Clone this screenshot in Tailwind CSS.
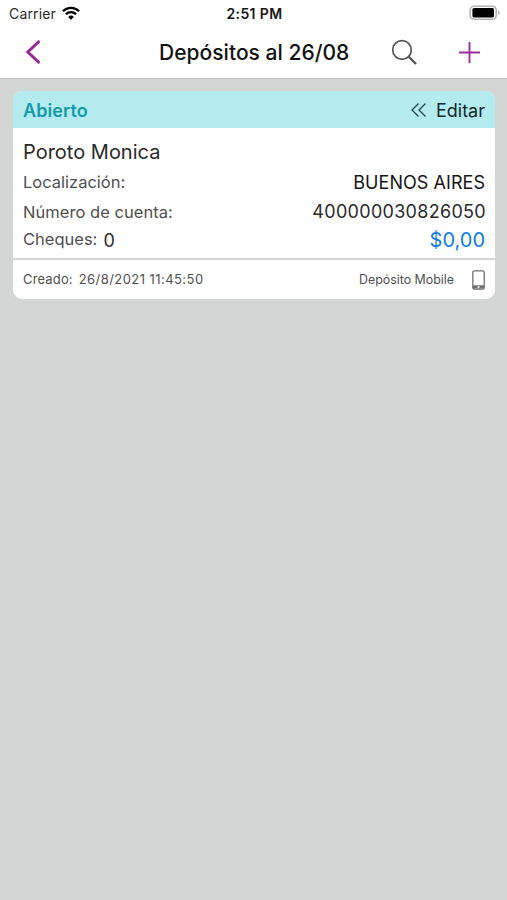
<!DOCTYPE html>
<html lang="es">
<head>
  <meta charset="UTF-8">
  <title>Depósitos</title>
  <script src="https://cdn.jsdelivr.net/npm/@tailwindcss/browser@4"></script>
</head>
<body class="bg-[#d4d6d5] h-[900px] overflow-hidden font-['Inter','Liberation_Sans',sans-serif] text-[#2a2a2a]">
  <header class="bg-white h-[79px] border-b border-[#c4c6c5]">
    <!-- Status bar -->
    <div class="grid grid-cols-3 items-center h-7 pl-[9px] pr-[7px]">
      <div class="flex items-center gap-1.5">
        <span class="text-[14px] leading-7 tracking-[0.15px]">Carrier</span>
        <svg class="w-[18px] h-[14px] mb-0.5" viewBox="0 0 18 14" fill="none" stroke="#000" stroke-width="2.3">
          <path d="M1 5.2a11.4 11.4 0 0 1 16 0"/>
          <path d="M3.9 8.3a7.3 7.3 0 0 1 10.2 0"/>
          <path d="M9 13.8L6.2 10.9a4 4 0 0 1 5.6 0z" fill="#000" stroke="none"/>
        </svg>
      </div>
      <span class="text-center text-[14px] leading-7 font-semibold tracking-[0.4px] text-[#161616] whitespace-nowrap">2:51 PM</span>
      <svg class="justify-self-end w-[31px] h-4 mb-0.5" viewBox="0 0 31 16">
        <rect x="1.2" y="1.2" width="26" height="13" rx="3.8" fill="#fff" stroke="#b4b4b4" stroke-width="1.6"/>
        <rect x="3.4" y="3" width="21.6" height="9.4" rx="1.6" fill="#000"/>
        <path d="M29 5.5c2.2.9 2.2 3.7 0 4.6z" fill="#b4b4b4"/>
      </svg>
    </div>
    <!-- Nav bar -->
    <div class="flex items-center h-12 pl-[25px] pr-[26px]">
      <svg class="w-4 h-6" viewBox="0 0 16 24" fill="none" stroke="#982c90" stroke-width="3">
        <path d="M14.5 1L2.8 12L14.5 23"/>
      </svg>
      <h1 class="ml-[118px] mt-px w-[190px] text-[21px] font-medium tracking-[0.03px] text-[#111] whitespace-nowrap">Depósitos al 26/08</h1>
      <svg class="ml-[42px] w-[27px] h-[27px]" viewBox="0 0 27 27" fill="none" stroke="#555">
        <circle cx="11" cy="11" r="9.3" stroke-width="1.7"/>
        <path d="M17.5 17.5L25 25" stroke-width="2.4"/>
      </svg>
      <svg class="ml-auto w-[23px] h-[23px]" viewBox="0 0 23 23" stroke="#a02c9a" stroke-width="1.9">
        <path d="M11.5 1v21M1 11.5h21"/>
      </svg>
    </div>
  </header>

  <main class="pt-3 pl-[13px] pr-3">
    <div class="bg-white rounded-[9px] overflow-hidden h-[208px]">
      <div class="flex items-center justify-between h-[37px] px-2.5 pt-px bg-[#b3ebef]">
        <span class="text-[18px] font-semibold tracking-[0.05px] text-[#1499a6]">Abierto</span>
        <div class="flex items-center gap-[9px]">
          <svg class="w-4 h-4" viewBox="0 0 16 16" fill="none" stroke="#29484b" stroke-width="1.3">
            <path d="M7.5 1.5L1 8l6.5 6.5M14.5 1.5L8 8l6.5 6.5"/>
          </svg>
          <span class="text-[18px] text-[#10282b]">Editar</span>
        </div>
      </div>

      <div class="h-[130px] px-2.5 pt-2.5 whitespace-nowrap">
        <h2 class="text-[20px] leading-[29px]">Poroto Monica</h2>
        <div class="flex justify-between h-[30px] leading-[30px]">
          <span class="text-[16.5px] text-[#505050]">Localización:</span>
          <span class="text-[18px] leading-8 tracking-[0.05px] text-[#161616]">BUENOS AIRES</span>
        </div>
        <div class="flex justify-between h-7 leading-[30px]">
          <span class="text-[16.5px] tracking-[0.04px] text-[#505050]">Número de cuenta:</span>
          <span class="text-[18px] tracking-[0.3px] -mr-px">400000030826050</span>
        </div>
        <div class="flex justify-between h-7">
          <div class="flex gap-1.5">
            <span class="text-[16.5px] leading-7 text-[#505050]">Cheques:</span>
            <span class="text-[18px] leading-8">0</span>
          </div>
          <span class="text-[20px] leading-[30px] text-[#127bee]">$0,00</span>
        </div>
      </div>

      <div class="flex items-center h-[41px] px-2.5 border-t-2 border-[#d4d6d5] text-[13px] text-[#505050] whitespace-nowrap">
        <span class="tracking-[0.15px]">Creado:</span>
        <span class="ml-1.5 tracking-[0.44px]">26/8/2021 11:45:50</span>
        <span class="ml-auto mt-px text-[12.4px]">Depósito Mobile</span>
        <svg class="ml-[18px] w-[13px] h-5" viewBox="0 0 13 20">
          <rect x=".8" y=".8" width="11.4" height="18.4" rx="1.6" fill="#fff" stroke="#707070" stroke-width="1.3"/>
          <path d="M1 15.3h11v3.2H1z" fill="#707070"/>
          <circle cx="6.5" cy="17" r="1" fill="#fff"/>
        </svg>
      </div>
    </div>
  </main>
</body>
</html>
